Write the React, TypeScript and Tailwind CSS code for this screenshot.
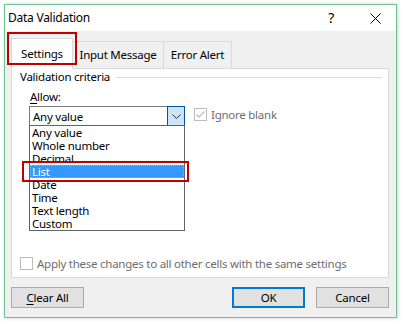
import React from 'react';

const options = ['Any value', 'Whole number', 'Decimal', 'List', 'Date', 'Time', 'Text length', 'Custom'];

const CheckBox: React.FC<{ checked?: boolean }> = ({ checked }) => (
  <div className="w-[13px] h-[13px] border border-[#bcbcbc] bg-white flex items-center justify-center shrink-0">
    {checked && (
      <svg width="11" height="11" viewBox="0 0 11 11">
        <path d="M1.5 5.5 L4 8 L9.5 2.5" fill="none" stroke="#bcbcbc" strokeWidth="1.2" />
      </svg>
    )}
  </div>
);

const Btn: React.FC<{ children: React.ReactNode; primary?: boolean }> = ({ children, primary }) => (
  <div
    className={`w-[73px] h-[21px] bg-[#e1e1e1] flex items-center justify-center text-black ${
      primary ? 'border-2 border-[#0078d7]' : 'border border-[#adadad]'
    }`}
  >
    {children}
  </div>
);

export default function App() {
  return (
    <div className="w-[404px] h-[327px] bg-white pt-[4px] pl-[4px] font-['Noto_Sans',sans-serif] text-[11.5px] tracking-[-0.25px] text-black">
      <div className="w-[393px] h-[314px] border border-[#6fc091] flex flex-col shadow-[1px_0_4px_rgba(0,0,0,0.18)]">
        {/* Title bar */}
        <div className="h-[26px] bg-white flex items-center pl-[3px] pr-[15px] shrink-0">
          <span className="text-[12px] leading-none">Data Validation</span>
          <span className="ml-auto text-[14px] leading-none mr-[36px]">?</span>
          <svg width="11" height="11" viewBox="0 0 11 11">
            <path d="M0.5 0.5 L10.5 10.5 M10.5 0.5 L0.5 10.5" stroke="#000" strokeWidth="1" />
          </svg>
        </div>

        {/* Body */}
        <div className="flex-1 bg-[#f0f0f0] relative">
          {/* Tabs */}
          <div className="flex items-end h-[37px] pl-[6px]">
            <div className="relative z-10 -mb-px w-[62px] h-[31px] bg-white border border-b-0 border-[#d9d9d9] flex items-center justify-center">
              Settings
              <div className="absolute -left-[5px] -top-[7px] w-[70px] h-[33px] border-2 border-[#c00000]" />
            </div>
            <div className="w-[91px] h-[27px] border-t border-r border-[#d9d9d9] flex items-center justify-center">
              Input Message
            </div>
            <div className="w-[68px] h-[27px] border-t border-r border-[#d9d9d9] flex items-center justify-center">
              Error Alert
            </div>
          </div>

          {/* Panel */}
          <div className="relative ml-[6px] w-[378px] h-[210px] bg-white border border-[#d9d9d9]">
            <div className="flex items-center h-[14px] pl-[8px] pr-[6px] mt-px">
              <span className="leading-none">Validation criteria</span>
              <div className="flex-1 ml-[6px] h-px bg-[#dcdcdc]" />
            </div>

            <div className="pl-[18px] mt-[6px] leading-[14px]">
              <span className="underline underline-offset-2">A</span>llow:
            </div>

            <div className="flex items-start pl-[17px] mt-[2px]">
              <div className="relative w-[156px] h-[21px] border border-[#7a7a7a] bg-white flex items-center">
                <span className="pl-[3px] leading-none">Any value</span>
                <div className="absolute -right-px -top-px w-[18px] h-[21px] bg-[#cce4f7] border border-[#005499] flex items-center justify-center">
                  <svg width="9" height="5" viewBox="0 0 9 5">
                    <path d="M0.5 0.5 L4.5 4.5 L8.5 0.5" fill="none" stroke="#333" strokeWidth="1" />
                  </svg>
                </div>
              </div>
              <div className="flex items-center ml-[9px] mt-[2px]">
                <CheckBox checked />
                <span className="ml-[4px] leading-none text-[#6d6d6d]">Ignore blank</span>
              </div>
            </div>

            {/* Dropdown list */}
            <div className="absolute left-[17px] top-[56px] w-[156px] h-[106px] border border-[#646464] bg-white z-10">
              {options.map((o) => (
                <div
                  key={o}
                  className={`relative h-[13px] leading-[13px] pl-[2px] ${
                    o === 'List'
                      ? 'bg-[#3399ff] text-white outline-1 outline-dotted outline-[#e8a040] -outline-offset-1'
                      : ''
                  }`}
                >
                  {o}
                  {o === 'List' && (
                    <div className="absolute -left-[8px] -top-[4px] w-[167px] h-[21px] border-2 border-[#c00000]" />
                  )}
                </div>
              ))}
            </div>

            <div className="absolute left-[8px] top-[188px] flex items-center">
              <CheckBox />
              <span className="ml-[4px] leading-none text-[#6d6d6d]">
                Apply these changes to all other cells with the same settings
              </span>
            </div>
          </div>

          {/* Buttons */}
          <div className="flex pl-[6px] mt-[9px]">
            <Btn>
              <span>
                <span className="underline underline-offset-2">C</span>lear All
              </span>
            </Btn>
            <div className="ml-[148px]">
              <Btn primary>OK</Btn>
            </div>
            <div className="ml-[11px]">
              <Btn>Cancel</Btn>
            </div>
          </div>
        </div>
      </div>
    </div>
  );
}
